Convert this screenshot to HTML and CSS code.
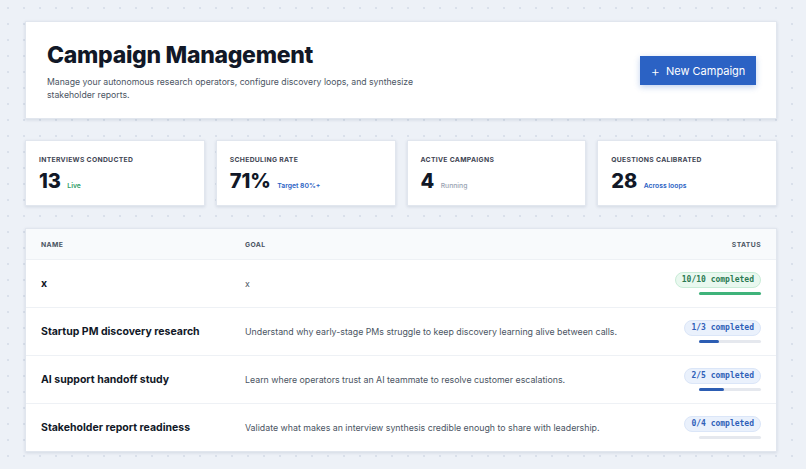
FILE: index.html
```html
<!DOCTYPE html>
<html lang="en">
<head>
    <meta charset="UTF-8">
    <title>Campaign Management</title>
    <link rel="stylesheet" href="styles.css">
</head>
<body>
    <div class="page">
        <div class="header-card">
            <div class="header-text">
                <h1>Campaign Management</h1>
                <p>Manage your autonomous research operators, configure discovery loops, and synthesize stakeholder reports.</p>
            </div>
            <button class="new-btn"><span class="plus">+</span> New Campaign</button>
        </div>

        <div class="stats">
            <div class="stat-card">
                <div class="stat-label">Interviews Conducted</div>
                <div class="stat-value">13 <span class="stat-note green">Live</span></div>
            </div>
            <div class="stat-card">
                <div class="stat-label">Scheduling Rate</div>
                <div class="stat-value">71% <span class="stat-note blue">Target 80%+</span></div>
            </div>
            <div class="stat-card">
                <div class="stat-label">Active Campaigns</div>
                <div class="stat-value">4 <span class="stat-note muted">Running</span></div>
            </div>
            <div class="stat-card">
                <div class="stat-label">Questions Calibrated</div>
                <div class="stat-value">28 <span class="stat-note blue">Across loops</span></div>
            </div>
        </div>

        <div class="table-card">
            <div class="row head">
                <div>Name</div>
                <div>Goal</div>
                <div class="status">Status</div>
            </div>
            <div class="row">
                <div class="name">x</div>
                <div class="goal">x</div>
                <div class="status">
                    <span class="pill done">10/10 completed</span>
                    <div class="bar done"><div class="fill" style="width: 100%"></div></div>
                </div>
            </div>
            <div class="row">
                <div class="name">Startup PM discovery research</div>
                <div class="goal">Understand why early-stage PMs struggle to keep discovery learning alive between calls.</div>
                <div class="status">
                    <span class="pill">1/3 completed</span>
                    <div class="bar"><div class="fill" style="width: 33%"></div></div>
                </div>
            </div>
            <div class="row">
                <div class="name">AI support handoff study</div>
                <div class="goal">Learn where operators trust an AI teammate to resolve customer escalations.</div>
                <div class="status">
                    <span class="pill">2/5 completed</span>
                    <div class="bar"><div class="fill" style="width: 40%"></div></div>
                </div>
            </div>
            <div class="row">
                <div class="name">Stakeholder report readiness</div>
                <div class="goal">Validate what makes an interview synthesis credible enough to share with leadership.</div>
                <div class="status">
                    <span class="pill">0/4 completed</span>
                    <div class="bar"><div class="fill" style="width: 0%"></div></div>
                </div>
            </div>
        </div>
    </div>
</body>
</html>
```

FILE: styles.css
```css
:root {
    --bg: #edf1f7;
    --card: #ffffff;
    --border: #e1e6ee;
    --ink: #111827;
    --muted: #4b5563;
    --blue: #2b62c4;
    --green: #2f9e68;
    --shadow: 0 1px 3px rgba(20, 40, 80, 0.12);
}

* {
    box-sizing: border-box;
}

body {
    margin: 0;
    font-family: Inter, "Liberation Sans", Arial, sans-serif;
    color: var(--ink);
    background-color: var(--bg);
    background-image: radial-gradient(rgba(150, 165, 190, 0.22) 0.8px, transparent 1px);
    background-size: 16px 16px;
}

.page {
    width: 752px;
    margin-left: 25px;
    padding: 21px 0 20px;
}

.header-card {
    display: flex;
    align-items: center;
    justify-content: space-between;
    background: var(--card);
    border: 1px solid var(--border);
    box-shadow: var(--shadow);
    height: 98px;
    padding: 0 20px 0 21px;
}

.header-text {
    padding-top: 2px;
}

h1 {
    margin: 0 0 7px;
    font-size: 23px;
    font-weight: 800;
    letter-spacing: -0.3px;
    line-height: 28px;
}

.header-text p {
    margin: 0;
    width: 380px;
    font-size: 8.7px;
    line-height: 13px;
    color: var(--muted);
}

.new-btn {
    background: var(--blue);
    color: #fff;
    border: none;
    height: 29px;
    width: 116px;
    font-family: inherit;
    font-size: 11px;
    box-shadow: 0 2px 6px rgba(43, 98, 196, 0.3);
    margin-top: 0;
}

.plus {
    font-size: 14px;
    font-weight: 300;
    margin-right: 3px;
    vertical-align: -1px;
}

.stats {
    display: grid;
    grid-template-columns: repeat(4, 1fr);
    gap: 11px;
    margin-top: 21px;
}

.stat-card {
    background: var(--card);
    border: 1px solid var(--border);
    box-shadow: var(--shadow);
    height: 66px;
    padding: 14px 13px 0;
}

.stat-label {
    font-size: 6.8px;
    font-weight: 700;
    text-transform: uppercase;
    letter-spacing: 0.3px;
    color: #3f4654;
}

.stat-value {
    margin-top: 5px;
    font-size: 20px;
    font-weight: 800;
    line-height: 24px;
}

.stat-note {
    font-size: 6.8px;
    font-weight: 600;
    margin-left: 2px;
}

.green { color: var(--green); }
.blue { color: var(--blue); }
.muted { color: #9aa3b2; font-weight: 500; }

.table-card {
    margin-top: 22px;
    background: var(--card);
    border: 1px solid var(--border);
    box-shadow: var(--shadow);
}

.row {
    display: grid;
    grid-template-columns: 204px 1fr auto;
    align-items: center;
    height: 48px;
    padding: 0 15px;
    border-top: 1px solid #eef1f5;
}

.row.head {
    height: 30px;
    border-top: none;
    background: #f8fafc;
    font-size: 6.8px;
    font-weight: 700;
    text-transform: uppercase;
    letter-spacing: 0.4px;
    color: #4b5563;
}

.name {
    font-size: 10.5px;
    font-weight: 700;
}

.goal {
    font-size: 8.8px;
    color: var(--muted);
}

.status {
    display: flex;
    flex-direction: column;
    align-items: flex-end;
}

.pill {
    font-family: "DejaVu Sans Mono", "Liberation Mono", monospace;
    font-size: 8px;
    font-weight: 700;
    color: #2f5fb8;
    background: #eaf1fc;
    border: 1px solid #dbe6f8;
    border-radius: 8px;
    padding: 2px 6px;
    line-height: 10px;
}

.pill.done {
    color: #2b7a52;
    background: #e9f8ef;
    border-color: #c9ecd7;
}

.bar {
    margin-top: 4px;
    width: 62px;
    height: 3px;
    background: #e5e8ee;
    border-radius: 2px;
}

.bar .fill {
    height: 100%;
    background: #2c5db3;
    border-radius: 2px;
}

.bar.done .fill {
    background: #3fb37a;
}
```
